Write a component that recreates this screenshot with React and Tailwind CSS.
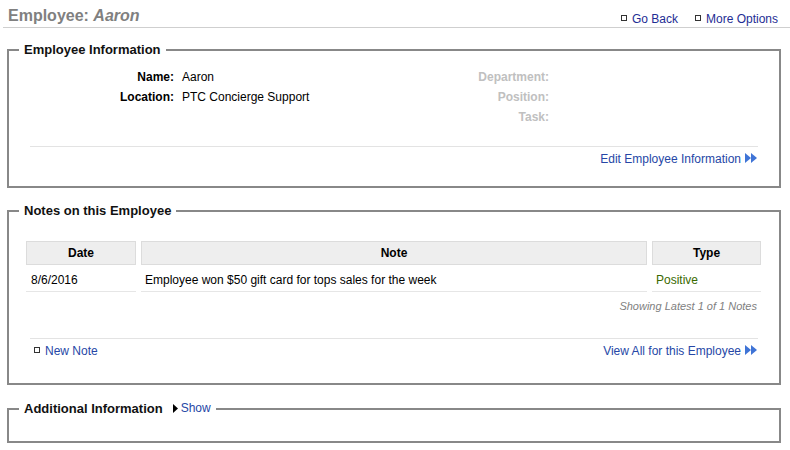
import React from 'react';

const Bullet = () => (
  <span className="inline-block w-[6px] h-[6px] border border-[#333] mr-[5px] relative top-[-1px]" />
);

const DoubleArrow = () => (
  <svg width="13" height="10" viewBox="0 0 13 10" className="inline-block ml-[4px] relative top-[-1px]">
    <polygon points="0,0 6,5 0,10" fill="#3f74d6" />
    <polygon points="6,0 12,5 6,10" fill="#3f74d6" />
  </svg>
);

const Box = ({ title, extra, children, className = '' }) => (
  <fieldset className={`border-2 border-[#888] ml-[7px] mr-[9px] ${className}`}>
    <legend className="ml-[10px] px-[5px] text-[13px] leading-[15px] font-bold text-[#111]">
      {title}
      {extra}
    </legend>
    {children}
  </fieldset>
);

const App = () => {
  return (
    <div className="w-[790px] h-[450px] bg-white font-['Liberation_Sans',Arial,sans-serif] text-[12px] text-black overflow-hidden">
      <div className="ml-[3px] h-[28px] border-b border-[#cfcfcf] flex items-end justify-between">
        <h1 className="ml-[5px] mb-[1px] text-[16px] leading-[20px] font-bold text-[#808080]">
          Employee: <i>Aaron</i>
        </h1>
        <div className="flex items-center gap-[17px] pr-[12px] pb-[1px] text-[12px] leading-[14px] text-[#1e2d94]">
          <span className="flex items-center"><Bullet />Go Back</span>
          <span className="flex items-center"><Bullet />More Options</span>
        </div>
      </div>

      <Box title="Employee Information" className="mt-[14px]">
        <div className="pt-[10px] grid grid-cols-[165px_194px_165px_1fr] gap-x-2 auto-rows-[20px] items-center">
          <div className="text-right font-bold">Name:</div>
          <div>Aaron</div>
          <div className="text-right font-bold text-[#c0c0c0]">Department:</div>
          <div />
          <div className="text-right font-bold">Location:</div>
          <div>PTC Concierge Support</div>
          <div className="text-right font-bold text-[#c0c0c0]">Position:</div>
          <div />
          <div />
          <div />
          <div className="text-right font-bold text-[#c0c0c0]">Task:</div>
          <div />
        </div>
        <div className="mx-[21px] mt-[19px] border-t border-[#e3e3e3] pt-[5px] pb-[20px] flex justify-end">
          <span className="text-[#2647a6] leading-[14px] flex items-center">Edit Employee Information<DoubleArrow /></span>
        </div>
      </Box>

      <Box title="Notes on this Employee" className="mt-[15px]">
        <div className="ml-[17px] mr-[18px] mt-[23px]">
          <div className="grid grid-cols-[110px_1fr_109px] gap-x-[5px]">
            <div className="h-[24px] bg-[#eeeeee] border border-[#dcdcdc] font-bold flex items-center justify-center">Date</div>
            <div className="h-[24px] bg-[#eeeeee] border border-[#dcdcdc] font-bold flex items-center justify-center">Note</div>
            <div className="h-[24px] bg-[#eeeeee] border border-[#dcdcdc] font-bold flex items-center justify-center">Type</div>
          </div>
          <div className="grid grid-cols-[110px_1fr_109px] gap-x-[5px] mt-[4px]">
            <div className="h-[23px] border-b border-[#e6e6e6] flex items-center pl-[5px]">8/6/2016</div>
            <div className="h-[23px] border-b border-[#e6e6e6] flex items-center pl-[4px]">Employee won $50 gift card for tops sales for the week</div>
            <div className="h-[23px] border-b border-[#e6e6e6] flex items-center pl-[4px] text-[#3a6a00]">Positive</div>
          </div>
        </div>
        <div className="pr-[22px] pt-[7px] text-right italic text-[11px] leading-[14px] text-[#808080]">Showing Latest 1 of 1 Notes</div>
        <div className="mx-[21px] mt-[25px] border-t border-[#e3e3e3] pt-[5px] pb-[25px] flex justify-between leading-[14px]">
          <span className="flex items-center text-[#2647a6] pl-[4px]"><Bullet />New Note</span>
          <span className="text-[#2647a6] flex items-center">View All for this Employee<DoubleArrow /></span>
        </div>
      </Box>

      <Box
        title="Additional Information"
        className="mt-[16px]"
        extra={
          <span className="ml-[10px] font-normal text-[12px] text-[#2647a6] inline-flex items-center">
            <svg width="5" height="9" viewBox="0 0 5 9" className="mr-[3px]">
              <polygon points="0,0 5,4.5 0,9" fill="#000" />
            </svg>
            Show
          </span>
        }
      >
        <div className="h-[25px]" />
      </Box>
    </div>
  );
};

export default App;
